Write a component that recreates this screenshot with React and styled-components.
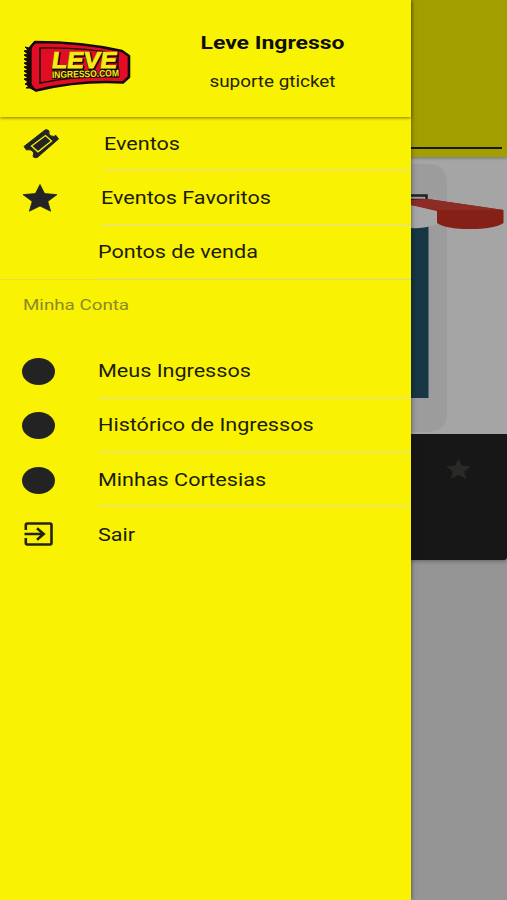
import React from 'react';
import styled, { createGlobalStyle } from 'styled-components';

const Global = createGlobalStyle`
  * { box-sizing: border-box; }
  body { margin: 0; background: #959595; font-family: Roboto, "Liberation Sans", sans-serif; }
`;

const Screen = styled.div`
  position: relative;
  width: 507px;
  height: 900px;
  overflow: hidden;
  background: #959595;
`;

const Page = styled.main`
  display: flex;
  flex-direction: column;
  height: 100%;
`;

const Toolbar = styled.header`
  height: 157px;
  padding: 147px 5px 0 0;
  background: #a29e00;
  box-shadow: 0 1px 3px rgba(0, 0, 0, 0.3);
  z-index: 1;
`;

const TabIndicator = styled.div`
  height: 2px;
  background: #171708;
`;

const EventCard = styled.article`
  height: 403px;
  border-radius: 0 0 3px 3px;
  overflow: hidden;
  box-shadow: 0 1px 4px rgba(0, 0, 0, 0.35);
`;

const Cover = styled.div`
  height: 277px;
  display: flex;
  justify-content: flex-end;
  background: #a5a5a5;
`;

const CardFooter = styled.div`
  height: 126px;
  display: flex;
  justify-content: flex-end;
  padding: 25px 36px 0 0;
  background: #171717;
`;

const Drawer = styled.aside`
  position: absolute;
  inset: 0 auto 0 0;
  width: 411px;
  z-index: 2;
  background: #f9f303;
  box-shadow: 0 0 5px rgba(0, 0, 0, 0.5);
`;

const DrawerHeader = styled.header`
  height: 117px;
  display: flex;
  background: #f9f303;
  box-shadow: 0 1px 3px rgba(70, 60, 0, 0.65);
`;

const Brand = styled.div`
  width: 133px;
  padding: 36px 0 0 20px;
`;

const Account = styled.div`
  flex: 1;
  display: flex;
  flex-direction: column;
  align-items: center;
  padding: 31px 0 0;
`;

const WideText = styled.span`
  display: inline-block;
  white-space: nowrap;
  transform: scaleX(${(p) => p.$stretch || 1.233});
  transform-origin: ${(p) => (p.$centered ? 'center' : 'left')};
`;

const AccountName = styled.strong`
  font-size: 18px;
  line-height: 24px;
  font-weight: 700;
  color: #100f06;
`;

const AccountMail = styled.span`
  margin-top: 16px;
  font-size: 16px;
  line-height: 22px;
  color: #222206;
`;

const Menu = styled.nav`
  display: flex;
  flex-direction: column;
`;

const Row = styled.a`
  display: flex;
  height: 54.3px;
  color: #1c1c06;
  font-size: 17.5px;
`;

const IconSlot = styled.span`
  width: ${(p) => p.$width}px;
  flex: none;
  display: flex;
  align-items: center;
  padding: 0 0 0 22px;
`;

const RowLabel = styled.span`
  flex: 1;
  display: flex;
  align-items: center;
  padding-top: 1px;
  border-bottom: ${(p) => (p.$last ? '0' : '2px')} solid #ece759;
`;

const SectionEdge = styled.hr`
  width: 100%;
  height: 1px;
  margin: -1px 0 0;
  border: 0;
  background: #e4dd4c;
`;

const Disc = styled.i`
  width: 33px;
  height: 27px;
  border-radius: 50%;
  background: #232323;
`;

const SectionTitle = styled.h2`
  height: 64.5px;
  margin: 0;
  padding: 13px 0 0 23px;
  font-size: 15.5px;
  line-height: 24px;
  font-weight: 400;
  color: #8b882c;
`;

const Logo = () => (
  <svg width="113" height="60" viewBox="20 36 113 60" aria-label="Leve Ingresso.com">
    <path
      d="M35 42 Q83 42 122 51 L129 56 V77 L123 82.500 Q80 80 36 90.500 L30 86.500 V48 Z"
      fill="#e00d25" stroke="#16090a" strokeWidth="2.600" strokeLinejoin="round"
    />
    <path
      d="M35 41 L29 48 25 47 28 50 24 51 28 54 24 55 28 58 24 59 28 62 24 63 28 66 24 67 28 70 24 71 28 74 24 75 28 78 24 79 28 82 25 84 29 86 26 88 30 88 36 91 31 84 V49 Z"
      fill="#16090a" stroke="#16090a" strokeWidth="1"
    />
    <path d="M40 48 Q82 47 118 54 V77 Q82 75 40 83 Z" fill="none" stroke="#16090a" strokeWidth="1.500" />
    <g fontFamily="'Liberation Sans', sans-serif" fontWeight="700" fill="#f6ec12">
      <text transform="translate(51.500 69) skewX(-8)" fontSize="23" textLength="65" lengthAdjust="spacingAndGlyphs" fill="#16090a" stroke="#16090a" strokeWidth="2.600" strokeLinejoin="round">LEVE</text>
      <text transform="translate(51 68) skewX(-8)" fontSize="23" textLength="65" lengthAdjust="spacingAndGlyphs" stroke="#f6ec12" strokeWidth="0.900">LEVE</text>
      <text transform="translate(52 78) rotate(-1.500)" fontSize="9.500" textLength="67" lengthAdjust="spacingAndGlyphs" stroke="#16090a" strokeWidth="1.800" paintOrder="stroke">INGRESSO.COM</text>
    </g>
  </svg>
);

const TicketIcon = () => (
  <svg width="38" height="32" viewBox="22 128 38 32">
    <path
      d="M24 146.500 L45 130 Q47 129 49 131 Q48 135 51 136 Q54 137 56 135.500 L58.500 139 L37.500 157.300 Q35 158.500 33 156.500 Q35 152.500 32 150.500 Q29 149 26.500 150 Z"
      fill="#242424" stroke="#242424" strokeWidth="1" strokeLinejoin="round"
    />
    <path d="M31.500 146 L45.500 135.500 L51.500 141 L38 151.800 Z" fill="none" stroke="#f9f303" strokeWidth="1.300" />
  </svg>
);

const StarIcon = ({ width, height, color }) => (
  <svg width={width} height={height} viewBox="0 0 36 28" preserveAspectRatio="none">
    <path d="M18 0.500 L22.600 9.600 L35 10.600 L25.800 17.400 L28.600 27.200 L18 22 L7.400 27.200 L10.200 17.400 L1 10.600 L13.400 9.600 Z" fill={color} stroke={color} strokeWidth="0.800" strokeLinejoin="round" />
  </svg>
);

const ExitIcon = () => (
  <svg width="32" height="26" viewBox="0 0 32 26" fill="none" stroke="#242410" strokeWidth="2.600">
    <path d="M3.800 9 V4 Q3.800 2.500 5.300 2.500 H28 Q29.500 2.500 29.500 4 V22 Q29.500 23.500 28 23.500 H5.300 Q3.800 23.500 3.800 22 V17" />
    <path d="M2.500 13 H21 M15 7.300 L21.700 13 L15 18.700" />
  </svg>
);

const StoreCover = () => (
  <svg width="96" height="277" viewBox="411 157 96 277">
    <path d="M411 164 H428 Q447 164 447 184 V414 Q447 432 425 432 H411 Z" fill="#9c9c9c" />
    <path d="M411 195.500 H426.500 V207 M411 200 H424" fill="none" stroke="#202020" strokeWidth="2.500" />
    <rect x="411" y="205" width="17.500" height="193" fill="#163743" />
    <path d="M411 203 L439 210 V223 Q428 229 411 228 Z" fill="#a6a6a9" />
    <path d="M411 200 L428 199 L503.500 210 V223 Q494 229 470 229 Q446 229 437 223 V211 L411 205 Z" fill="#842016" />
    <path d="M411 200 L428 199 L503.500 210 L439 210 L411 205 Z" fill="#8d2c24" />
  </svg>
);

const primary = [
  { label: 'Eventos', icon: <TicketIcon />, width: 104 },
  { label: 'Eventos Favoritos', icon: <StarIcon width={36} height={28} color="#242424" />, width: 101 },
  { label: 'Pontos de venda', width: 98 },
];

const account = [
  { label: 'Meus Ingressos', icon: <Disc />, width: 98 },
  { label: 'Histórico de Ingressos', icon: <Disc />, width: 98 },
  { label: 'Minhas Cortesias', icon: <Disc />, width: 98 },
  { label: 'Sair', icon: <ExitIcon />, width: 98, last: true },
];

const MenuRow = ({ label, icon, width, last }) => (
  <Row>
    <IconSlot $width={width}>{icon}</IconSlot>
    <RowLabel $last={last}><WideText>{label}</WideText></RowLabel>
  </Row>
);

export default function App() {
  return (
    <Screen>
      <Global />
      <Page>
        <Toolbar><TabIndicator /></Toolbar>
        <EventCard>
          <Cover><StoreCover /></Cover>
          <CardFooter><StarIcon width={25} height={20} color="#2b2a29" /></CardFooter>
        </EventCard>
      </Page>
      <Drawer>
        <DrawerHeader>
          <Brand><Logo /></Brand>
          <Account>
            <AccountName><WideText $centered $stretch={1.275}>Leve Ingresso</WideText></AccountName>
            <AccountMail><WideText $centered $stretch={1.18}>suporte gticket</WideText></AccountMail>
          </Account>
        </DrawerHeader>
        <Menu>
          {primary.map((item) => <MenuRow key={item.label} {...item} />)}
          <SectionEdge />
          <SectionTitle><WideText $stretch={1.21}>Minha Conta</WideText></SectionTitle>
          {account.map((item) => <MenuRow key={item.label} {...item} />)}
        </Menu>
      </Drawer>
    </Screen>
  );
}
